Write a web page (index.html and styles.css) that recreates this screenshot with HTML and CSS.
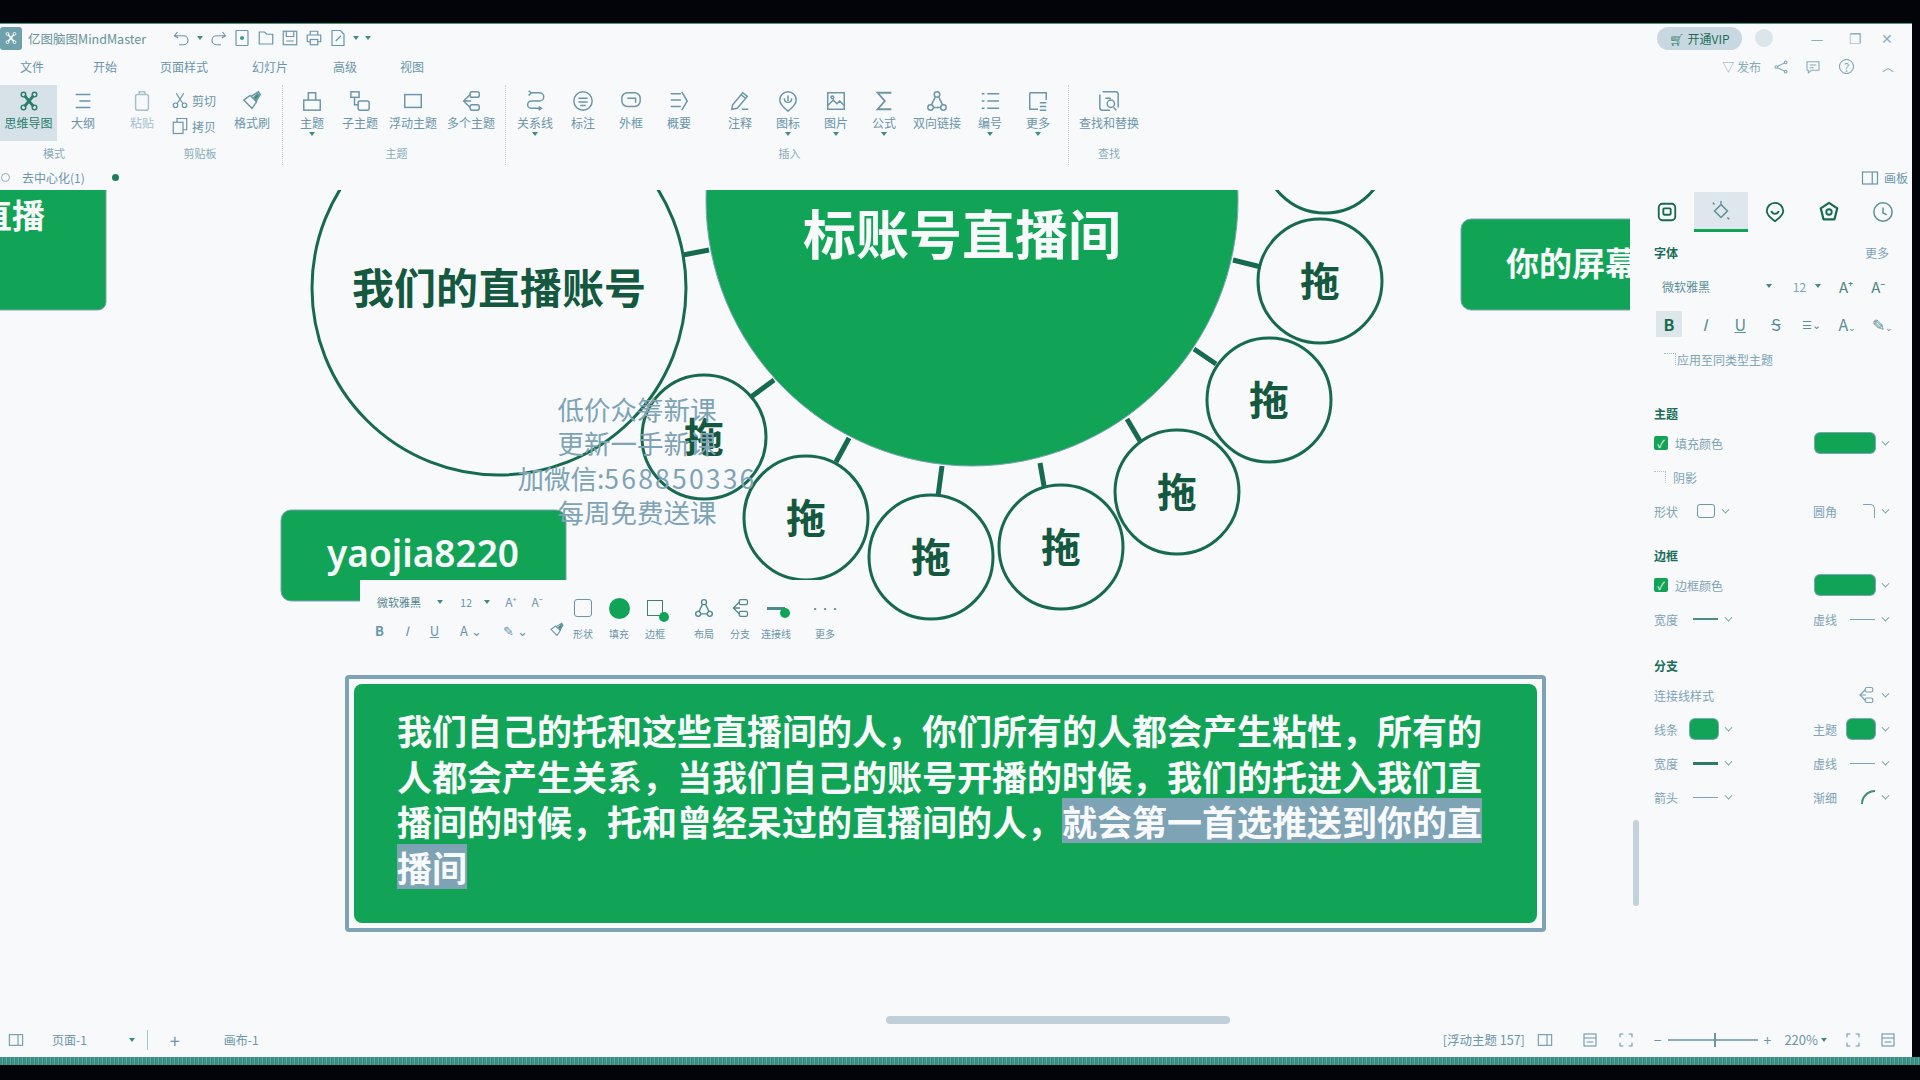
FILE: index.html
```html
<!DOCTYPE html>
<html lang="zh-CN">

<head>
    <meta charset="UTF-8">
    <title>亿图脑图MindMaster</title>
    <link rel="stylesheet" href="styles.css">
</head>

<body>
    <svg class="defs">
        <symbol id="i-mind" viewBox="0 0 24 24"><path d="M7 6l10 12M17 6L7 18" stroke-width="3"/><circle cx="6" cy="5" r="2.5"/><circle cx="18" cy="5" r="2.5"/><circle cx="6" cy="19" r="2.5"/><circle cx="18" cy="19" r="2.5"/></symbol>
        <symbol id="i-outline" viewBox="0 0 24 24"><path d="M4 5h16M8 12h12M4 19h16"/></symbol>
        <symbol id="i-paste" viewBox="0 0 24 24"><rect x="5" y="5" width="14" height="17" rx="2"/><path d="M9 5V2h6v3"/></symbol>
        <symbol id="i-cut" viewBox="0 0 24 24"><circle cx="6" cy="19" r="3"/><circle cx="18" cy="19" r="3"/><path d="M8 17L17 3M16 17L7 3"/></symbol>
        <symbol id="i-copy" viewBox="0 0 24 24"><rect x="3" y="7" width="13" height="15"/><path d="M8 7V2h13v15h-5"/></symbol>
        <symbol id="i-brush" viewBox="0 0 24 24"><path d="M3 11l9 9 5-7-7-7zM11 7l8-5 2 3-5 8"/><path class="fill" d="M14 8l4-4 2 2-4 5z"/></symbol>
        <symbol id="i-topic" viewBox="0 0 24 24"><rect x="3" y="11" width="18" height="11"/><path d="M8 11V3h8v8"/></symbol>
        <symbol id="i-sub" viewBox="0 0 24 24"><rect x="2" y="2" width="9" height="6"/><path d="M6 8v8h4"/><rect x="10" y="12" width="12" height="10" rx="2"/></symbol>
        <symbol id="i-float" viewBox="0 0 24 24"><rect x="3" y="5" width="18" height="14"/></symbol>
        <symbol id="i-multi" viewBox="0 0 24 24"><rect x="11" y="2" width="10" height="6" rx="2"/><rect x="11" y="16" width="10" height="6" rx="2"/><path d="M11 5L4 12l7 7M4 12h8"/></symbol>
        <symbol id="i-rel" viewBox="0 0 24 24"><path d="M8 3h9a4 4 0 010 9H8a4 4 0 000 8h10"/><path d="M5 1l3 2-3 3M16 18l3 2-3 2"/></symbol>
        <symbol id="i-call" viewBox="0 0 24 24"><path d="M12 2a10 10 0 100 20 10 10 0 000-20z"/><path d="M7 9h10M7 13h10M9 17h6"/></symbol>
        <symbol id="i-frame" viewBox="0 0 24 24"><path d="M8 3h8a6 6 0 016 6v3a6 6 0 01-6 6H8a6 6 0 01-6-6V9a6 6 0 016-6z"/><path d="M8 9h9v5"/></symbol>
        <symbol id="i-sum" viewBox="0 0 24 24"><path d="M3 4h11M3 11h11M3 18h11"/><path d="M15 2l6 10-6 10"/></symbol>
        <symbol id="i-note" viewBox="0 0 24 24"><path d="M4 16L15 3l5 4L9 20l-6 1zM13 5l5 4"/><path d="M14 21h7"/></symbol>
        <symbol id="i-mark" viewBox="0 0 24 24"><path d="M12 2a9 9 0 00-9 9c0 5 5 9 9 12 4-3 9-7 9-12a9 9 0 00-9-9z"/><path d="M8 9c0 6 8 6 8 0M12 6v6"/></symbol>
        <symbol id="i-pic" viewBox="0 0 24 24"><rect x="3" y="3" width="18" height="18"/><path d="M3 17l6-6 4 4 3-3 5 5"/><circle cx="8" cy="8" r="1.5"/></symbol>
        <symbol id="i-sigma" viewBox="0 0 24 24"><path d="M20 3H5l8 9-8 9h15" stroke-width="2"/></symbol>
        <symbol id="i-link" viewBox="0 0 24 24"><circle cx="12" cy="5" r="3"/><circle cx="5" cy="19" r="3"/><circle cx="19" cy="19" r="3"/><path d="M10 8l-4 8M14 8l4 8M8 19h8"/></symbol>
        <symbol id="i-num" viewBox="0 0 24 24"><path d="M3 4h3M3 12h3M3 20h3M9 4h13M9 12h13M9 20h13"/></symbol>
        <symbol id="i-more" viewBox="0 0 24 24"><path d="M3 3h18v8M3 3v18h9"/><path d="M14 14h7M14 18h7M14 22h7"/></symbol>
        <symbol id="i-find" viewBox="0 0 24 24"><path d="M5 2h14a3 3 0 013 3v14M2 5v14a3 3 0 003 3h8"/><circle cx="14" cy="15" r="4"/><path d="M8 9h6M17 19l3 3"/></symbol>
        <symbol id="i-undo" viewBox="0 0 24 24"><path d="M6 4L2 9l5 3M3 9h11a6 6 0 010 12H8"/></symbol>
        <symbol id="i-redo" viewBox="0 0 24 24"><path d="M18 4l4 5-5 3M21 9H10a6 6 0 000 12h6"/></symbol>
        <symbol id="i-new" viewBox="0 0 24 24"><rect x="4" y="2" width="16" height="20" rx="1"/><circle class="fill" cx="12" cy="12" r="2"/></symbol>
        <symbol id="i-open" viewBox="0 0 24 24"><path d="M3 20V4h7l3 3h8v13z"/></symbol>
        <symbol id="i-save" viewBox="0 0 24 24"><rect x="3" y="3" width="18" height="18"/><path d="M7 3v7h10V3M7 16h10"/></symbol>
        <symbol id="i-print" viewBox="0 0 24 24"><path d="M7 8V3h10v5M7 17H3V8h18v9h-4"/><rect x="7" y="14" width="10" height="7"/></symbol>
        <symbol id="i-export" viewBox="0 0 24 24"><path d="M4 2h11l5 5v15H4z"/><path d="M9 16l7-7"/></symbol>
        <symbol id="i-panel" viewBox="0 0 24 24"><rect x="2" y="4" width="20" height="16"/><path d="M15 4v16"/></symbol>
        <symbol id="i-page" viewBox="0 0 24 24"><rect x="3" y="3" width="18" height="18" rx="4" stroke-width="2"/><rect x="8" y="8" width="8" height="7" rx="1" stroke-width="2"/></symbol>
        <symbol id="i-style" viewBox="0 0 24 24"><path d="M12 5l7 7-7 7-7-7z"/><path d="M12 1v3M3 3l2 2M21 21l-2-2"/></symbol>
        <symbol id="i-pin" viewBox="0 0 24 24"><path d="M12 2a9 9 0 00-9 9c0 5 5 8 9 11 4-3 9-6 9-11a9 9 0 00-9-9z" stroke-width="2"/><path d="M8 11c1 4 7 4 8 0" stroke-width="2"/></symbol>
        <symbol id="i-flower" viewBox="0 0 24 24"><path d="M12 2l9 6-3 12H6L3 8z" stroke-width="2.4" stroke-linejoin="round"/><circle cx="12" cy="12" r="3" stroke-width="2"/></symbol>
        <symbol id="i-clock" viewBox="0 0 24 24"><path d="M12 2a10 10 0 100 20 10 10 0 000-20z"/><path d="M12 7v6l4 2"/></symbol>
        <symbol id="i-fit" viewBox="0 0 24 24"><path d="M3 8V3h5M16 3h5v5M21 16v5h-5M8 21H3v-5"/></symbol>
        <symbol id="i-map" viewBox="0 0 24 24"><rect x="3" y="3" width="18" height="18"/><path d="M3 9h18M7 15h10"/></symbol>
        <symbol id="i-share" viewBox="0 0 24 24"><circle cx="5" cy="12" r="2"/><circle cx="19" cy="5" r="2"/><circle cx="19" cy="19" r="2"/><path d="M7 11l10-5M7 13l10 5"/></symbol>
        <symbol id="i-comment" viewBox="0 0 24 24"><path d="M3 4h18v13H10l-5 4v-4H3zM7 9h10M7 13h6"/></symbol>
    </svg>

    <div class="app">
        <header class="titlebar">
            <div class="logo"><svg class="ico-sm"><use href="#i-mind"/></svg></div>
            <span class="appname">亿图脑图MindMaster</span>
            <div class="quick">
                <svg class="ico-q"><use href="#i-undo"/></svg><i class="caret"></i>
                <svg class="ico-q"><use href="#i-redo"/></svg>
                <svg class="ico-q"><use href="#i-new"/></svg>
                <svg class="ico-q"><use href="#i-open"/></svg>
                <svg class="ico-q"><use href="#i-save"/></svg>
                <svg class="ico-q"><use href="#i-print"/></svg>
                <svg class="ico-q"><use href="#i-export"/></svg><i class="caret"></i><i class="caret"></i>
            </div>
            <div class="vip">🛒︎<span>开通VIP</span></div>
            <i class="avatar"></i>
            <div class="winbtns">
                <span class="wbtn wbtn-min">—</span>
                <span class="wbtn">❐</span>
                <span class="wbtn">✕</span>
            </div>
        </header>

        <nav class="menubar">
            <span class="menu m-file">文件</span>
            <span class="menu m-start">开始</span>
            <span class="menu m-page">页面样式</span>
            <span class="menu m-slide">幻灯片</span>
            <span class="menu m-adv">高级</span>
            <span class="menu m-view">视图</span>
            <div class="menu-right">
                <span>▽ 发布</span>
                <svg class="mr-ic mr-share"><use href="#i-share"/></svg>
                <svg class="mr-ic mr-comment"><use href="#i-comment"/></svg>
                <span class="help">?</span>
                <span class="mr-up">︿</span>
            </div>
        </nav>

        <section class="ribbon">
            <div class="group g-mode">
                <div class="items">
                    <div class="rb rb-active w56"><svg><use href="#i-mind"/></svg><span>思维导图</span></div>
                    <div class="rb w52"><svg><use href="#i-outline"/></svg><span>大纲</span></div>
                </div>
                <div class="glabel">模式</div>
            </div>
            <div class="group g-clip">
                <div class="items">
                    <div class="rb faint"><svg><use href="#i-paste"/></svg><span>粘贴</span></div>
                    <div class="stack">
                        <div class="srow"><svg><use href="#i-cut"/></svg>剪切</div>
                        <div class="srow"><svg><use href="#i-copy"/></svg>拷贝</div>
                    </div>
                    <div class="rb"><svg><use href="#i-brush"/></svg><span>格式刷</span></div>
                </div>
                <div class="glabel">剪贴板</div>
            </div>
            <div class="group g-topic">
                <div class="items">
                    <div class="rb"><svg><use href="#i-topic"/></svg><span>主题</span><i class="caret"></i></div>
                    <div class="rb"><svg><use href="#i-sub"/></svg><span>子主题</span></div>
                    <div class="rb w58"><svg><use href="#i-float"/></svg><span>浮动主题</span></div>
                    <div class="rb w58"><svg><use href="#i-multi"/></svg><span>多个主题</span></div>
                </div>
                <div class="glabel">主题</div>
            </div>
            <div class="group g-insert">
                <div class="items">
                    <div class="rb"><svg><use href="#i-rel"/></svg><span>关系线</span><i class="caret"></i></div>
                    <div class="rb"><svg><use href="#i-call"/></svg><span>标注</span></div>
                    <div class="rb"><svg><use href="#i-frame"/></svg><span>外框</span></div>
                    <div class="rb"><svg><use href="#i-sum"/></svg><span>概要</span></div>
                    <div class="rb-gap"></div>
                    <div class="rb"><svg><use href="#i-note"/></svg><span>注释</span></div>
                    <div class="rb"><svg><use href="#i-mark"/></svg><span>图标</span><i class="caret"></i></div>
                    <div class="rb"><svg><use href="#i-pic"/></svg><span>图片</span><i class="caret"></i></div>
                    <div class="rb"><svg><use href="#i-sigma"/></svg><span>公式</span><i class="caret"></i></div>
                    <div class="rb w58"><svg><use href="#i-link"/></svg><span>双向链接</span></div>
                    <div class="rb"><svg><use href="#i-num"/></svg><span>编号</span><i class="caret"></i></div>
                    <div class="rb"><svg><use href="#i-more"/></svg><span>更多</span><i class="caret"></i></div>
                </div>
                <div class="glabel">插入</div>
            </div>
            <div class="group g-find">
                <div class="items">
                    <div class="rb w80"><svg><use href="#i-find"/></svg><span>查找和替换</span></div>
                </div>
                <div class="glabel">查找</div>
            </div>
        </section>

        <div class="tabbar">
            <i class="tab-icon"></i>
            <span class="tab-name">去中心化(1)</span>
            <i class="tab-dot"></i>
            <div class="board-btn"><svg class="ico-board"><use href="#i-panel"/></svg>画板</div>
        </div>

        <main class="main">
            <div class="canvas">
                <svg class="map" width="1630" height="834" viewBox="0 190 1630 834">
                    <rect class="green" x="-10" y="180" width="116" height="130" rx="8"/>
                    <text class="node-text" x="-21" y="228">直播</text>
                    <rect class="green" x="1461" y="219" width="200" height="91" rx="10"/>
                    <text class="node-text" x="1506" y="276">你的屏幕</text>

                    <path class="link" d="M683 255L709 250M1233 260L1261 267M1194 349L1216 364M1127 419L1140 441M1040 463L1044 486M942 466L938 496M849 438L836 462M774 380L751 397"/>
                    <circle class="green" cx="972" cy="200" r="266"/>
                    <text class="big-text" x="962" y="255">标账号直播间</text>

                    <circle class="ring" cx="499" cy="288" r="187"/>
                    <text class="ring-text" x="499" y="304">我们的直播账号</text>

                    <circle class="ring" cx="1325" cy="151" r="62"/>
                    <circle class="ring" cx="1320" cy="281" r="62"/>
                    <text class="drag" x="1320" y="296">拖</text>
                    <circle class="ring" cx="1269" cy="400" r="62"/>
                    <text class="drag" x="1269" y="415">拖</text>
                    <circle class="ring" cx="1177" cy="492" r="62"/>
                    <text class="drag" x="1177" y="507">拖</text>
                    <circle class="ring" cx="1061" cy="547" r="62"/>
                    <text class="drag" x="1061" y="562">拖</text>
                    <circle class="ring" cx="931" cy="557" r="62"/>
                    <text class="drag" x="931" y="572">拖</text>
                    <circle class="ring" cx="806" cy="518" r="62"/>
                    <text class="drag" x="806" y="533">拖</text>
                    <circle class="ring" cx="704" cy="437" r="62"/>
                    <text class="drag" x="704" y="452">拖</text>

                    <rect class="green" x="281" y="510" width="285" height="91" rx="10"/>
                    <text class="yao-text" x="423" y="552">yaojia8220</text>
                </svg>

                <div class="watermark">低价众筹新课<br>更新一手新课<br>加微信:<span class="wm-num">568850336</span><br>每周免费送课</div>

                <div class="mini">
                    <div class="mini-font">
                        <div class="mini-row">
                            <span class="mf-name">微软雅黑</span><i class="caret"></i>
                            <span class="mf-size">12</span><i class="caret"></i>
                            <span class="mf-a">A⁺</span><span class="mf-a">A⁻</span>
                        </div>
                        <div class="mini-row mini-row2">
                            <b>B</b><em>I</em><u>U</u><span>A ⌄</span><span>✎ ⌄</span><svg class="mini-brush"><use href="#i-brush"/></svg>
                        </div>
                    </div>
                    <div class="mini-tools">
                        <div class="mt"><span class="mt-ic"><i class="shape-ic"></i></span><span>形状</span></div>
                        <div class="mt"><span class="mt-ic"><i class="fill-ic"></i></span><span>填充</span></div>
                        <div class="mt"><span class="mt-ic"><i class="border-ic"></i></span><span>边框</span></div>
                        <div class="mt mt-gap"><span class="mt-ic"><svg><use href="#i-link"/></svg></span><span>布局</span></div>
                        <div class="mt"><span class="mt-ic"><svg><use href="#i-multi"/></svg></span><span>分支</span></div>
                        <div class="mt"><span class="mt-ic"><i class="line-ic"></i></span><span>连接线</span></div>
                        <div class="mt mt-gap"><span class="mt-ic">•••</span><span>更多</span></div>
                    </div>
                </div>

                <div class="callout">
                    <div class="callout-in">我们自己的托和这些直播间的人，你们所有的人都会产生粘性，所有的<br>人都会产生关系，当我们自己的账号开播的时候，我们的托进入我们直<br>播间的时候，托和曾经呆过的直播间的人，<span class="sel">就会第一首选推送到你的直<br>播间</span></div>
                </div>

                <div class="hscroll"></div>
            </div>

            <aside class="panel">
                <div class="vscroll"></div>
                <div class="ptabs">
                    <div class="ptab"><svg class="dark"><use href="#i-page"/></svg></div>
                    <div class="ptab ptab-on"><svg><use href="#i-style"/></svg></div>
                    <div class="ptab"><svg class="dark"><use href="#i-pin"/></svg></div>
                    <div class="ptab"><svg class="dark"><use href="#i-flower"/></svg></div>
                    <div class="ptab"><svg><use href="#i-clock"/></svg></div>
                </div>

                <div class="phead"><b>字体</b><span>更多</span></div>
                <div class="fontrow">
                    <span class="fname">微软雅黑</span><i class="caret"></i>
                    <span class="fsize">12</span><i class="caret"></i>
                    <span class="fa">A⁺</span><span class="fa">A⁻</span>
                </div>
                <div class="fmtrow">
                    <span class="fmt fmt-on"><b>B</b></span>
                    <span class="fmt"><em>I</em></span>
                    <span class="fmt"><u>U</u></span>
                    <span class="fmt"><s>S</s></span>
                    <span class="fmt fmt-small">☰⌄</span>
                    <span class="fmt">A<small>⌄</small></span>
                    <span class="fmt">✎<small>⌄</small></span>
                </div>
                <div class="applyrow"><i class="box-empty"></i>应用至同类型主题</div>

                <h4 class="sec sec-theme">主题</h4>
                <div class="row"><label><i class="check">✓</i>填充颜色</label><span class="swatch swatch-l"></span><i class="chev"></i></div>
                <div class="row"><label><i class="box-empty"></i>阴影</label></div>
                <div class="row">
                    <div class="col"><span>形状</span><i class="shape-ic sm"></i><i class="chev"></i></div>
                    <div class="col"><span>圆角</span><i class="corner-ic"></i><i class="chev"></i></div>
                </div>

                <h4 class="sec">边框</h4>
                <div class="row"><label><i class="check">✓</i>边框颜色</label><span class="swatch swatch-l"></span><i class="chev"></i></div>
                <div class="row">
                    <div class="col"><span>宽度</span><i class="ln"></i><i class="chev"></i></div>
                    <div class="col"><span>虚线</span><i class="ln thin"></i><i class="chev"></i></div>
                </div>

                <h4 class="sec sec-branch">分支</h4>
                <div class="row"><label>连接线样式</label><svg class="ico-conn"><use href="#i-multi"/></svg><i class="chev"></i></div>
                <div class="row">
                    <div class="col"><span>线条</span><span class="swatch"></span><i class="chev"></i></div>
                    <div class="col"><span>主题</span><span class="swatch"></span><i class="chev"></i></div>
                </div>
                <div class="row">
                    <div class="col"><span>宽度</span><i class="ln bold"></i><i class="chev"></i></div>
                    <div class="col"><span>虚线</span><i class="ln thin"></i><i class="chev"></i></div>
                </div>
                <div class="row">
                    <div class="col"><span>箭头</span><i class="ln thin"></i><i class="chev"></i></div>
                    <div class="col"><span>渐细</span><i class="taper-ic"></i><i class="chev"></i></div>
                </div>
            </aside>
        </main>

        <footer class="status">
            <svg class="st-ic"><use href="#i-panel"/></svg>
            <span class="st-page">页面-1</span><i class="caret"></i>
            <i class="st-sep"></i>
            <span class="st-plus">+</span>
            <span class="st-sheet">画布-1</span>
            <div class="st-right">
                <span class="st-topic">[浮动主题 157]</span>
                <svg class="st-ic st-a"><use href="#i-panel"/></svg>
                <svg class="st-ic st-b"><use href="#i-map"/></svg>
                <svg class="st-ic st-c"><use href="#i-fit"/></svg>
                <span class="st-zoom">−<i class="slider"><i class="thumb"></i></i>+</span>
                <span class="st-pct">220%</span><i class="caret"></i>
                <svg class="st-ic st-d"><use href="#i-fit"/></svg>
                <svg class="st-ic st-e"><use href="#i-map"/></svg>
            </div>
        </footer>
    </div>
    <div class="band"></div>
</body>

</html>
```

FILE: styles.css
```css
* {
    box-sizing: border-box;
}

body {
    margin: 0;
    height: 1080px;
    overflow: hidden;
    background: #02040a;
    font-family: "Noto Sans CJK SC", "Noto Sans", sans-serif;
    font-size: 12px;
    color: #6b95a9;
}

.defs {
    display: none;
}

svg {
    fill: none;
    stroke: currentColor;
    stroke-width: 1.6;
}

svg .fill {
    fill: #12a456;
}

i {
    font-style: normal;
}

.app {
    margin-top: 23px;
    width: 1912px;
    height: 1034px;
    background: #f7f9fb;
    display: flex;
    flex-direction: column;
    border-top: 1px solid #3d9d84;
}

.band {
    width: 100%;
    height: 8px;
    background: repeating-linear-gradient(90deg, #3e8d86 0 2px, #6a98a8 2px 3px, #1e9a6a 3px 4px);
}

.caret {
    display: inline-block;
    width: 0;
    height: 0;
    border-left: 3px solid transparent;
    border-right: 3px solid transparent;
    border-top: 4px solid #3f8b84;
}

/* title bar */
.titlebar {
    height: 31px;
    padding-bottom: 3px;
    display: flex;
    align-items: center;
    position: relative;
}

.logo {
    width: 22px;
    height: 23px;
    background: #6fa0ac;
    border-radius: 3px;
    color: #f7f9fb;
    display: flex;
    align-items: center;
    justify-content: center;
}

.ico-sm {
    width: 14px;
    height: 14px;
}

.appname {
    margin-left: 6px;
    width: 142px;
    font-size: 12.5px;
    white-space: nowrap;
    color: #679297;
}

.quick {
    margin-left: 3px;
    width: 208px;
    display: flex;
    align-items: center;
    gap: 6px;
}

.ico-q {
    width: 18px;
    height: 18px;
}

.vip {
    margin-left: 1276px;
    width: 85px;
    height: 23px;
    flex: none;
    border-radius: 12px;
    background: #c9d8e0;
    display: flex;
    align-items: center;
    justify-content: center;
    gap: 3px;
    color: #2f7f6c;
    white-space: nowrap;
}

.vip span {
    color: #1b6d57;
}

.avatar {
    margin-left: 13px;
    width: 18px;
    height: 18px;
    flex: none;
    border-radius: 50%;
    background: #dbe5ea;
}

.winbtns {
    margin-left: auto;
    display: flex;
    gap: 2px;
    padding-right: 10px;
    font-size: 14px;
    color: #8eaebd;
}

.wbtn {
    width: 30px;
    text-align: center;
}

.wbtn-min {
    margin-right: 6px;
}

/* menu */
.menubar {
    height: 25px;
    margin-top: -1px;
    display: flex;
    align-items: center;
    font-size: 12px;
}

.menu {
    flex: none;
    text-align: center;
    white-space: nowrap;
}

.m-file {
    width: 64px;
}

.m-start {
    width: 82px;
}

.m-page {
    width: 76px;
}

.m-slide {
    width: 96px;
}

.m-adv {
    width: 54px;
}

.m-view {
    width: 80px;
}

.menu-right {
    margin-left: auto;
    display: flex;
    align-items: center;
    padding-right: 18px;
    white-space: nowrap;
    color: #86a9b9;
}

.mr-ic {
    width: 16px;
    height: 16px;
}

.mr-share {
    margin-left: 12px;
}

.mr-comment {
    margin-left: 16px;
}

.help {
    margin-left: 18px;
    width: 15px;
    height: 15px;
    border: 1px solid #6b95a9;
    border-radius: 50%;
    text-align: center;
    line-height: 13px;
}

.mr-up {
    margin-left: 28px;
}

/* ribbon */
.ribbon {
    height: 85px;
    margin-top: 1px;
    padding-top: 5px;
    display: flex;
}

.group {
    display: flex;
    flex-direction: column;
    flex: none;
}

.g-mode {
    width: 118px;
}

.g-mode .glabel {
    padding-right: 10px;
}

.g-clip {
    width: 165px;
    border-right: 1px dotted #c4d4dc;
}

.g-topic {
    width: 223px;
    padding-left: 5px;
    border-right: 1px dotted #c4d4dc;
}

.g-insert {
    width: 563px;
    padding-left: 5px;
    border-right: 1px dotted #c4d4dc;
}

.g-find {
    width: 80px;
}

.items {
    display: flex;
    height: 56px;
}

.glabel {
    text-align: center;
    font-size: 11px;
    color: #8aabba;
    line-height: 14px;
    margin-top: 5px;
}

.rb {
    width: 48px;
    height: 56px;
    flex: none;
    display: flex;
    flex-direction: column;
    align-items: center;
    white-space: nowrap;
    position: relative;
    font-size: 12px;
}

.rb svg {
    width: 22px;
    height: 22px;
    margin-top: 5px;
}

.rb span {
    margin-top: 3px;
    line-height: 16px;
}

.rb .caret {
    margin-top: 1px;
}

.rb-active {
    background: #d6e2e8;
    color: #2a7d6c;
}

.faint {
    color: #a5c0cc;
}

.rb-gap {
    width: 13px;
    flex: none;
}

.w52 {
    width: 52px;
}

.w56 {
    width: 57px;
}

.w58 {
    width: 58px;
}

.w80 {
    width: 80px;
}

.stack {
    width: 62px;
    flex: none;
    display: flex;
    flex-direction: column;
    gap: 6px;
    padding-top: 5px;
}

.srow {
    display: flex;
    align-items: center;
    gap: 3px;
    padding-left: 5px;
    height: 20px;
}

.srow svg {
    width: 18px;
    height: 18px;
}

/* tab bar */
.tabbar {
    height: 25px;
    display: flex;
    align-items: center;
    position: relative;
}

.tab-icon {
    width: 9px;
    height: 9px;
    border: 1px solid #8aabba;
    border-radius: 50%;
    margin-left: 1px;
}

.tab-name {
    margin-left: 12px;
    font-size: 12px;
    width: 90px;
}

.tab-dot {
    width: 7px;
    height: 7px;
    border-radius: 50%;
    background: #1f7a5f;
}

.board-btn {
    margin-left: auto;
    margin-right: 4px;
    display: flex;
    align-items: center;
    gap: 5px;
}

.ico-board {
    width: 18px;
    height: 18px;
}

/* canvas */
.main {
    flex: 1;
    min-height: 0;
    display: flex;
}

.canvas {
    width: 1630px;
    position: relative;
    overflow: hidden;
    flex: none;
}

.map {
    display: block;
}

.green {
    fill: #12a456;
    stroke: #7ea3b5;
    stroke-width: 1;
}

.ring {
    fill: none;
    stroke: #166a4d;
    stroke-width: 3;
}

.link {
    stroke: #166a4d;
    stroke-width: 5;
}

.node-text,
.big-text,
.yao-text {
    fill: #f7f9fb;
    stroke: none;
    font-weight: 700;
}

.node-text {
    font-size: 33px;
}

.big-text {
    font-size: 53px;
    text-anchor: middle;
}

.yao-text {
    font-family: "Noto Sans", sans-serif;
    font-size: 37px;
    font-weight: 600;
    text-anchor: middle;
    dominant-baseline: central;
}

.ring-text {
    fill: #14593f;
    stroke: none;
    font-size: 42px;
    font-weight: 700;
    text-anchor: middle;
}

.drag {
    fill: #14593f;
    stroke: none;
    font-size: 40px;
    font-weight: 700;
    text-anchor: middle;
}

.watermark {
    position: absolute;
    left: 500px;
    top: 202px;
    width: 274px;
    text-align: center;
    font-size: 26.5px;
    line-height: 34.3px;
    color: #7ea3b5;
    white-space: nowrap;
}

.wm-num {
    letter-spacing: 2.2px;
}

/* floating toolbar */
.mini {
    position: absolute;
    left: 360px;
    top: 390px;
    width: 510px;
    height: 70px;
    background: #f7f9fb;
    display: flex;
    padding: 11px 0 0 15px;
    font-size: 11px;
}

.mini-font {
    width: 190px;
    flex: none;
}

.mini-row {
    display: flex;
    align-items: center;
    height: 22px;
    gap: 12px;
    white-space: nowrap;
    padding-left: 2px;
}

.mini-row2 {
    margin-top: 6px;
    gap: 21px;
    font-size: 13px;
    padding-left: 0;
}

.mf-name {
    color: #55858f;
    width: 48px;
}

.mf-size {
    margin-left: 5px;
}

.mf-a {
    margin-left: 3px;
    font-size: 12px;
}

.mini-brush {
    width: 16px;
    height: 16px;
}

.mini-tools {
    display: flex;
    margin-left: 0;
    padding-top: 5px;
}

.mt {
    width: 36px;
    display: flex;
    flex-direction: column;
    align-items: center;
    white-space: nowrap;
    font-size: 10px;
    gap: 6px;
}

.mt-gap {
    margin-left: 13px;
}

.mt-ic {
    height: 24px;
    display: flex;
    align-items: center;
    justify-content: center;
    color: #528b8f;
}

.mt-ic svg {
    width: 20px;
    height: 20px;
}

.shape-ic {
    display: block;
    width: 18px;
    height: 18px;
    border: 1.5px solid #6b95a9;
    border-radius: 3px;
}

.shape-ic.sm {
    height: 14px;
    margin-left: 7px;
}

.fill-ic {
    display: block;
    width: 21px;
    height: 21px;
    border-radius: 50%;
    background: #12a456;
}

.border-ic {
    display: block;
    width: 16px;
    height: 16px;
    border: 1.5px solid #3f7f78;
    position: relative;
}

.border-ic::after {
    content: "";
    position: absolute;
    right: -7px;
    bottom: -7px;
    width: 10px;
    height: 10px;
    border-radius: 50%;
    background: #12a456;
}

.line-ic {
    display: block;
    width: 18px;
    height: 3px;
    background: #4e8a8c;
    position: relative;
}

.line-ic::after {
    content: "";
    position: absolute;
    right: -5px;
    top: 1px;
    width: 10px;
    height: 10px;
    border-radius: 50%;
    background: #12a456;
}

/* text box under the map */
.callout {
    position: absolute;
    left: 345px;
    top: 485px;
    width: 1201px;
    height: 257px;
    border: 4px solid #7ea3b5;
    padding: 5px;
    border-radius: 4px;
    background: #f7f9fb;
}

.callout-in {
    height: 100%;
    background: #12a456;
    border-radius: 8px;
    padding: 23px 0 0 43px;
    color: #f7f9fb;
    font-size: 35px;
    font-weight: 700;
    line-height: 45.5px;
    white-space: nowrap;
}

.sel {
    background: linear-gradient(transparent 3px, #7ea3b5 3px, #7ea3b5 48px, transparent 48px);
}

.hscroll {
    position: absolute;
    left: 886px;
    top: 826px;
    width: 344px;
    height: 8px;
    border-radius: 4px;
    background: #c0d0d8;
}

/* right panel */
.panel {
    width: 282px;
    flex: none;
    padding: 0 23px 0 24px;
    position: relative;
    color: #7ea3b5;
}

.vscroll {
    position: absolute;
    left: 3px;
    top: 630px;
    width: 6px;
    height: 86px;
    border-radius: 3px;
    background: #c2d2da;
}

.ptabs {
    display: flex;
    margin: 2px 0 0 -14px;
    height: 40px;
}

.ptab {
    width: 54px;
    height: 40px;
    flex: none;
    display: flex;
    align-items: center;
    justify-content: center;
    color: #5b8f96;
}

.ptab svg {
    width: 22px;
    height: 22px;
}

.ptab .dark {
    color: #176a50;
}

.ptab-on {
    background: #dde7ec;
    border-bottom: 3px solid #12a456;
}

.phead {
    display: flex;
    justify-content: space-between;
    margin-top: 12px;
    line-height: 18px;
}

.phead b {
    color: #1c6d58;
}

.fontrow {
    display: flex;
    align-items: center;
    margin-top: 15px;
    height: 18px;
    white-space: nowrap;
}

.fname {
    margin-left: 8px;
    width: 104px;
    color: #5b8f96;
}

.fsize {
    margin-left: 12px;
    width: 31px;
    text-align: center;
}

.fa {
    font-size: 15px;
    color: #4b8586;
    margin-left: 18px;
}

.fmtrow {
    display: flex;
    justify-content: space-between;
    align-items: center;
    margin: 16px -7px 0 2px;
    height: 26px;
    font-size: 16px;
    color: #5b8f96;
}

.fmt {
    width: 26px;
    height: 26px;
    line-height: 26px;
    text-align: center;
    white-space: nowrap;
}

.fmt small {
    font-size: 9px;
}

.fmt-small {
    font-size: 11px;
}

.fmt-on {
    background: #dce6eb;
    color: #176a50;
}

.applyrow {
    display: flex;
    align-items: center;
    gap: 1px;
    margin-top: 14px;
    padding-left: 10px;
    height: 16px;
    font-size: 12px;
}

.box-empty {
    display: inline-block;
    width: 12px;
    height: 12px;
    border-top: 1px dotted #a9c2ce;
    border-right: 1px dotted #a9c2ce;
    flex: none;
}

.sec {
    margin: 19px 0 0;
    font-size: 12px;
    font-weight: 700;
    color: #1c6d58;
    line-height: 18px;
}

.sec-theme {
    margin-top: 38px;
}

.sec-branch {
    margin-top: 21px;
}

.sec + .row {
    margin-top: 3px;
}

.row {
    height: 34px;
    display: flex;
    align-items: center;
    white-space: nowrap;
}

.row label {
    display: flex;
    align-items: center;
    gap: 7px;
    margin-right: auto;
}

.check {
    width: 14px;
    height: 14px;
    border-radius: 2px;
    background: #12a456;
    color: #f7f9fb;
    font-size: 11px;
    line-height: 14px;
    text-align: center;
}

.swatch {
    display: block;
    width: 28px;
    height: 20px;
    border-radius: 5px;
    background: #12a456;
    box-shadow: 0 0 0 1px #7ea3b5;
}

.swatch-l {
    width: 60px;
}

.chev {
    display: block;
    width: 7px;
    height: 7px;
    border-right: 1.5px solid #5b9a90;
    border-bottom: 1.5px solid #5b9a90;
    transform: rotate(45deg) scale(0.8);
    margin: 0 0 3px 7px;
    flex: none;
}

.col {
    width: 50%;
    display: flex;
    align-items: center;
}

.col:first-child {
    width: 158px;
}

.col > span:first-child {
    width: 36px;
}

.col:last-child {
    margin-left: auto;
    width: 76px;
    justify-content: flex-end;
    position: relative;
}

.col:last-child > span:first-child {
    position: absolute;
    left: 0;
}

.col:first-child > i:last-child {
    margin-left: 7px;
}

.ln {
    display: block;
    width: 25px;
    height: 2px;
    background: #4e8d86;
    flex: none;
}

.col:first-child > .ln {
    margin-left: 3px;
}

.ln.thin {
    height: 1px;
    background: #7ea3b5;
}

.ln.bold {
    height: 3px;
    background: #2c7a68;
}

.corner-ic {
    display: block;
    width: 12px;
    height: 14px;
    border-top: 1px solid #7ea3b5;
    border-right: 1px solid #7ea3b5;
    border-top-right-radius: 5px;
}

.taper-ic {
    display: block;
    width: 14px;
    height: 14px;
    border-top: 2px solid #3f9072;
    border-left: 2px solid #3f9072;
    border-top-left-radius: 14px;
}

.ico-conn {
    width: 18px;
    height: 18px;
}

/* status bar */
.status {
    height: 33px;
    display: flex;
    align-items: center;
    padding: 0 0 2px 8px;
    white-space: nowrap;
}

.st-ic {
    width: 16px;
    height: 16px;
    flex: none;
}

.st-page {
    margin: 0 42px 0 28px;
}

.st-sep {
    width: 1px;
    height: 20px;
    margin-left: 12px;
    background: #a9c2ce;
}

.st-plus {
    margin-left: 22px;
    font-size: 18px;
    line-height: 1;
}

.st-sheet {
    margin-left: 44px;
}

.st-right {
    margin-left: auto;
    display: flex;
    align-items: center;
    padding-right: 16px;
}

.st-topic {
    font-size: 12.5px;
}

.st-a {
    margin-left: 12px;
}

.st-b {
    margin-left: 29px;
}

.st-c {
    margin-left: 20px;
}

.st-d {
    margin-left: 18px;
}

.st-e {
    margin-left: 19px;
}

.st-zoom {
    margin-left: 20px;
    display: flex;
    align-items: center;
    gap: 6px;
    font-size: 14px;
}

.st-pct {
    margin-left: 13px;
    margin-right: 3px;
    font-size: 13px;
}

.slider {
    width: 90px;
    height: 2px;
    background: #8aabba;
    position: relative;
}

.thumb {
    position: absolute;
    left: 46px;
    top: -6px;
    width: 2px;
    height: 14px;
    background: #6b95a9;
}
```
